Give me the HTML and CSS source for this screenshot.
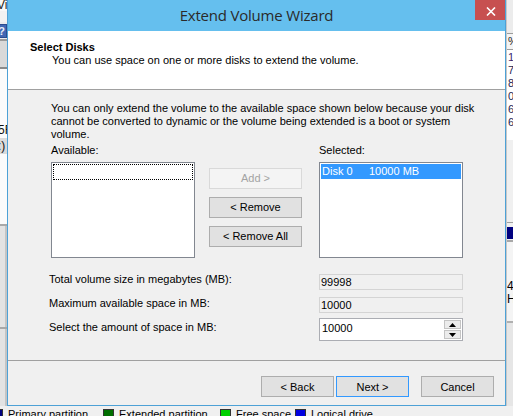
FILE: index.html
```html
<!DOCTYPE html>
<html>
<head>
<meta charset="utf-8">
<title>Extend Volume Wizard</title>
<link rel="stylesheet" href="styles.css">
</head>
<body>
<div class="desktop">
  <div class="bg-main">
    <div class="bg-left">
      <div class="bl-menu">Vi</div>
      <div class="bl-bar"></div>
      <div class="bl-tool"><span class="help">?</span></div>
      <div class="bl-grey"></div>
      <div class="bl-list">
        <div class="bl-row">5F</div>
        <div class="bl-row sel">:)</div>
      </div>
      <div class="bl-lower"><div class="bl-col"></div></div>
      <div class="bl-bottom"><div class="bl-col"></div></div>
    </div>
    <div class="bg-right">
      <div class="br-top"></div>
      <div class="br-head">%</div>
      <div class="br-rows">
        <div class="br-row first">1</div>
        <div class="br-row">7</div>
        <div class="br-row">8</div>
        <div class="br-row">0</div>
        <div class="br-row">6</div>
        <div class="br-row">6</div>
      </div>
      <div class="br-gap"></div>
      <div class="br-disk"></div>
      <div class="br-info">
        <div class="br-line">4</div>
        <div class="br-line">He</div>
      </div>
      <div class="br-end"></div>
    </div>
  </div>
  <div class="legend">
    <span class="sq primary"></span><span class="lg-text lg1">Primary partition</span>
    <span class="sq extended"></span><span class="lg-text lg2">Extended partition</span>
    <span class="sq free"></span><span class="lg-text lg3">Free space</span>
    <span class="sq logical"></span><span class="lg-text lg4">Logical drive</span>
  </div>

  <div class="dialog">
    <div class="titlebar">
      <span class="title">Extend Volume Wizard</span>
      <span class="close">
        <svg width="10" height="9" viewBox="0 0 10 9"><path d="M1 0.5 L9 8.5 M9 0.5 L1 8.5" stroke="#fff" stroke-width="1.6" fill="none"/></svg>
      </span>
    </div>
    <div class="header">
      <div class="h-title">Select Disks</div>
      <div class="h-sub">You can use space on one or more disks to extend the volume.</div>
    </div>
    <div class="content">
      <p class="intro">You can only extend the volume to the available space shown below because your disk<br>cannot be converted to dynamic or the volume being extended is a boot or system<br>volume.</p>
      <div class="picker">
        <div class="lbl">Available:</div>
        <div class="lbl-spacer"></div>
        <div class="lbl">Selected:</div>
        <div class="listbox"><div class="item focus"></div></div>
        <div class="mid-btns">
          <span class="btn disabled">Add &gt;</span>
          <span class="btn">&lt; Remove</span>
          <span class="btn">&lt; Remove All</span>
        </div>
        <div class="listbox"><div class="item sel"><span class="c1">Disk 0</span><span>10000 MB</span></div></div>
      </div>
      <div class="fields">
        <div class="field f1"><span class="flabel">Total volume size in megabytes (MB):</span><span class="ro">99998</span></div>
        <div class="field f2"><span class="flabel">Maximum available space in MB:</span><span class="ro">10000</span></div>
        <div class="field f3"><span class="flabel">Select the amount of space in MB:</span>
          <span class="spin"><span class="spin-val">10000</span>
            <span class="spin-btns">
              <span class="sb"><svg width="7" height="4" viewBox="0 0 7 4"><path d="M0 4 L3.5 0 L7 4 Z" fill="#000"/></svg></span>
              <span class="sb"><svg width="7" height="4" viewBox="0 0 7 4"><path d="M0 0 L3.5 4 L7 0 Z" fill="#000"/></svg></span>
            </span>
          </span>
        </div>
      </div>
    </div>
    <div class="footer">
      <span class="btn fbtn">&lt; Back</span>
      <span class="btn fbtn default">Next &gt;</span>
      <span class="btn fbtn cancel">Cancel</span>
    </div>
  </div>
</div>
</body>
</html>
```

FILE: styles.css
```css
* { box-sizing: border-box; margin: 0; padding: 0; }
html, body { width: 513px; height: 416px; overflow: hidden; }
body {
  font-family: "Liberation Sans", Arial, sans-serif;
  font-size: 11px;
  color: #000;
  background: #f0f0f0;
}
.desktop {
  position: relative;
  width: 513px;
  height: 416px;
  display: flex;
  flex-direction: column;
  overflow: hidden;
}

/* ---------- background window (Disk Management) ---------- */
.bg-main { height: 406px; flex: none; display: flex; justify-content: space-between; }
.bg-left { width: 7px; display: flex; flex-direction: column; overflow: hidden; }
.bl-menu {
  height: 11px; background: #f8f8f8; font-size: 12px; line-height: 11px;
  text-indent: -3px; white-space: nowrap; color: #222;
}
.bl-bar { height: 11px; background: #f2f2f2; }
.bl-tool { height: 17px; background: #ececec; padding-top: 2px; }
.help {
  display: block; width: 15px; height: 14px; margin-left: -8px;
  background: #4168b4; border: 1px solid #2b4c8f; color: #e8eef8;
  font-weight: bold; font-size: 11px; line-height: 12px; text-align: right; padding-right: 1px;
}
.bl-grey {
  height: 30px; background: #d9d9d9;
  border-top: 2px solid #9a9a9a; border-bottom: 2px solid #8a8a8a;
}
.bl-list { height: 155px; background: #fbfbfb; padding-top: 53px; }
.bl-row { height: 16px; line-height: 16px; font-size: 12px; text-indent: -2px; white-space: nowrap; color: #111; }
.bl-row.sel { background: #dadada; }
.bl-lower { height: 103px; background: #e3e3e3; border-top: 2px solid #a8a8a8; display: flex; justify-content: flex-end; }
.bl-bottom { flex: 1; background: #e3e3e3; border-top: 2px solid #a8a8a8; display: flex; justify-content: flex-end; }
.bl-col { width: 2px; background: #c4c4c4; }

.bg-right { width: 7px; display: flex; flex-direction: column; overflow: hidden; border-left: 1px solid #c8c8c8; }
.br-top { height: 33px; background: #ececec; }
.br-head {
  height: 17px; background: #f4f4f4; border-top: 1px solid #9c9c9c; border-bottom: 1px solid #9c9c9c;
  line-height: 15px; font-size: 11px; color: #222; padding-left: 1px;
}
.br-rows { height: 90px; background: #fff; padding-top: 1px; }
.br-row { height: 13px; line-height: 13px; padding-left: 1px; color: #1c1c50; }
.br-row.first { color: #3a1f6e; }
.br-gap { height: 83px; background: #f0f0f0; border-bottom: 1px solid #a0a0a0; }
.br-disk { height: 19px; background: #f0f0f0; border-bottom: 2px solid #a8a8a8; padding-top: 4px; }
.br-disk::before { content: ""; display: block; height: 12px; background: #000080; }
.br-info { height: 81px; background: #f4f4f4; padding-top: 38px; border-bottom: 2px solid #b0b0b0; }
.br-line { height: 13px; line-height: 13px; font-size: 12px; white-space: nowrap; }
.br-end { flex: 1; background: #e6e6e6; }

.legend {
  height: 10px; flex: none; display: flex; align-items: flex-start; background: #f0f0f0;
  font-size: 11px; line-height: 14px; white-space: nowrap; margin-left: -8px; overflow: hidden;
}
.sq { flex: none; width: 11px; height: 11px; margin-top: 3px; border: 1px solid #333; }
.sq.primary { background: #000080; }
.sq.extended { background: #006e00; }
.sq.free { background: #00d000; }
.sq.logical { background: #0000e0; }
.lg-text { flex: none; margin: 1px 0 0 5px; }
.lg1 { width: 95px; }
.lg2 { width: 101px; }
.lg3 { width: 59px; }
.lg4 { width: 80px; }

/* ---------- dialog ---------- */
.dialog {
  position: absolute;
  left: 7px; top: 0;
  width: 499px; height: 406px;
  border: 1px solid #4da1d6; border-top: none;
  background: #f0f0f0;
  display: flex; flex-direction: column;
}
.titlebar {
  height: 31px; flex: none; background: #65bfee;
  display: flex; justify-content: center; position: relative;
}
.title {
  font-family: "Open Sans", "Noto Sans", sans-serif;
  font-size: 15px; line-height: 30px; color: #2a2a2a; letter-spacing: -0.2px;
}
.close {
  position: absolute; right: 0; top: 0;
  width: 30px; height: 20px; background: #c75050;
  display: flex; align-items: center; justify-content: center; padding-top: 2px; padding-left: 1px;
}
.header {
  height: 59px; flex: none; background: #fff; border-bottom: 1px solid #a0a0a0;
  padding: 10px 0 0 22px; line-height: 13px;
}
.h-title { font-weight: bold; }
.h-sub { padding-left: 22px; }
.content {
  height: 271px; flex: none; border-bottom: 1px solid #a0a0a0;
  padding: 12px 0 0 43px; line-height: 13px;
}
.intro { margin-bottom: 3px; }
.picker {
  display: grid;
  grid-template-columns: 144px 124px 144px;
  grid-template-rows: 13px 96px;
  row-gap: 5px;
}
.listbox { background: #fff; border: 1px solid #828790; padding: 1px; }
.item { height: 16px; line-height: 15px; }
.item.focus { outline: 1px dotted #000; outline-offset: -1px; }
.item.sel { background: #3399ff; color: #fff; display: flex; padding-left: 1px; height: 15px; line-height: 15px; }
.item .c1 { width: 47px; }
.mid-btns { display: flex; flex-direction: column; gap: 8px; padding: 6px 0 0 14px; }
.btn {
  display: flex; align-items: center; justify-content: center;
  width: 93px; height: 21px; background: #e1e1e1; border: 1px solid #adadad;
}
.btn.disabled { background: #f4f4f4; border-color: #d9d9d9; color: #a3a3a3; }

.fields { margin: 16px 0 0 -2px; display: flex; flex-direction: column; }
.field { display: flex; align-items: flex-start; }
.flabel { width: 270px; }
.f1 .flabel { margin-top: -1px; }
.f3 .flabel { margin-top: 3px; }
.f2 { margin-top: 7px; }
.f3 { margin-top: 5px; }
.ro {
  width: 144px; height: 16px; background: #f0f0f0; border: 1px solid #d4d4d4;
  line-height: 14px; padding-left: 1px;
}
.spin {
  width: 144px; height: 23px; background: #fff; border: 1px solid #abadb3;
  display: flex; justify-content: space-between;
}
.spin-val { padding: 3px 0 0 2px; line-height: 13px; }
.spin-btns { display: flex; flex-direction: column; gap: 1px; padding: 1px 1px 1px 0; }
.sb {
  width: 17px; height: 10px; background: #ececec; border: 1px solid #c4c4c4;
  display: flex; align-items: center; justify-content: center;
}

.footer {
  flex: 1; display: flex; justify-content: flex-end; align-items: flex-start;
  padding: 15px 11px 0 0;
}
.fbtn { width: 73px; }
.fbtn.default { border-color: #3399ff; margin-left: 2px; }
.fbtn.cancel { margin-left: 12px; }
```
